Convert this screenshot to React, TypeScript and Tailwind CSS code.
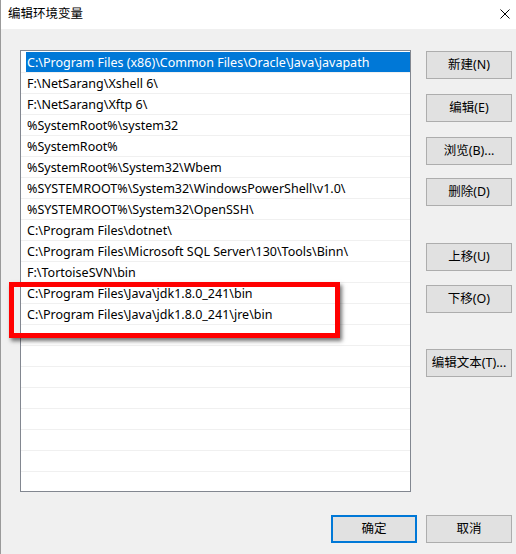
import React from 'react';

const paths = [
  'C:\\Program Files (x86)\\Common Files\\Oracle\\Java\\javapath',
  'F:\\NetSarang\\Xshell 6\\',
  'F:\\NetSarang\\Xftp 6\\',
  '%SystemRoot%\\system32',
  '%SystemRoot%',
  '%SystemRoot%\\System32\\Wbem',
  '%SYSTEMROOT%\\System32\\WindowsPowerShell\\v1.0\\',
  '%SYSTEMROOT%\\System32\\OpenSSH\\',
  'C:\\Program Files\\dotnet\\',
  'C:\\Program Files\\Microsoft SQL Server\\130\\Tools\\Binn\\',
  'F:\\TortoiseSVN\\bin',
  'C:\\Program Files\\Java\\jdk1.8.0_241\\bin',
  'C:\\Program Files\\Java\\jdk1.8.0_241\\jre\\bin',
];

// the list keeps drawing empty rows below the last entry
const rows = [...paths, ...Array(21 - paths.length).fill('')];

const font = { fontFamily: '"Noto Sans", "Noto Sans CJK SC", sans-serif' };

function WinButton({ label, className = '', primary = false }: { label: string; className?: string; primary?: boolean }) {
  return (
    <button
      className={`w-[86px] h-[28px] bg-[#e1e1e1] text-[12.5px] text-black flex items-center justify-center ${
        primary ? 'border-2 border-[#0078d7]' : 'border border-[#adadad]'
      } ${className}`}
    >
      {label}
    </button>
  );
}

export default function App() {
  return (
    <div className="relative w-[516px] h-[554px] bg-[#f0f0f0] overflow-hidden border-l border-[#9a9a9a]" style={font}>
      {/* title bar */}
      <div className="h-[29px] bg-white flex items-center justify-between pl-[8px] pr-[6px] -ml-px">
        <span className="text-[12.5px] text-black">编辑环境变量</span>
        <svg width="10" height="10" viewBox="0 0 10 10" className="mb-[2px]">
          <path d="M0.5 0.5 L9.5 9.5 M9.5 0.5 L0.5 9.5" stroke="#000" strokeWidth="1" />
        </svg>
      </div>

      <div className="flex pl-[19px] pt-[21px]">
        {/* path list */}
        <div className="w-[391px] h-[442px] bg-white border border-[#828790] overflow-hidden pt-px">
          {rows.map((p, i) => (
            <div key={i} className="h-[21px] border-b border-[#f0f0f0]">
              <div
                className={`h-[20px] ml-[5px] pl-px text-[12.5px] leading-[21px] whitespace-nowrap ${
                  i === 0 ? 'bg-[#0078d7] text-white' : 'text-black'
                }`}
              >
                {p}
              </div>
            </div>
          ))}
        </div>

        {/* side buttons */}
        <div className="flex flex-col ml-[15px] pt-px">
          <WinButton label="新建(N)" />
          <WinButton label="编辑(E)" className="mt-[15px]" />
          <WinButton label="浏览(B)..." className="mt-[15px]" />
          <WinButton label="删除(D)" className="mt-[13px]" />
          <WinButton label="上移(U)" className="mt-[37px]" />
          <WinButton label="下移(O)" className="mt-[14px]" />
          <WinButton label="编辑文本(T)..." className="mt-[36px]" />
        </div>
      </div>

      <div className="flex justify-end gap-[9px] pr-[4px] mt-[23px]">
        <WinButton label="确定" primary />
        <WinButton label="取消" />
      </div>

      {/* red highlight around the JDK entries */}
      <div className="absolute left-[8px] top-[282px] w-[331px] h-[56px] border-[5px] border-[#ff0000] shadow-[2px_3px_4px_rgba(0,0,0,0.55)]" />
    </div>
  );
}
